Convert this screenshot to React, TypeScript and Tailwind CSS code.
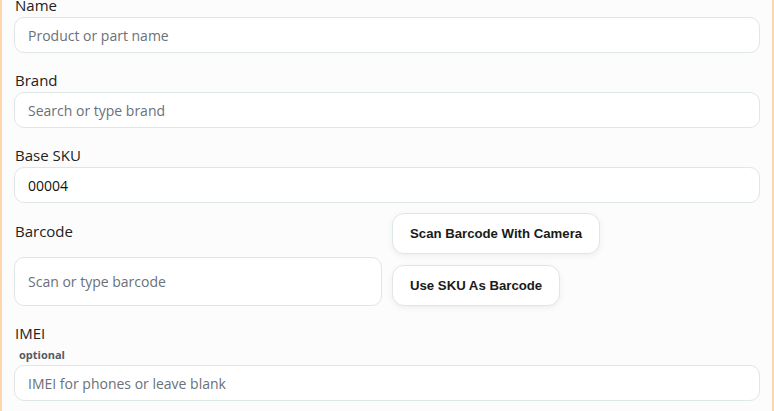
import React from 'react';

const font = { fontFamily: '"Open Sans", "Noto Sans", sans-serif' };

const inputCls =
  'w-full h-[36px] rounded-[10px] border border-[#dfe6e6] bg-white px-[13px] text-[14px] text-[#111] placeholder:text-[#6a7179] outline-none';

const btnCls =
  'h-[41px] rounded-[12px] border border-[#dfe6e6] bg-white px-[17px] text-[13.2px] font-bold text-[#1a1a1a] shadow-[0_2px_6px_rgba(0,0,0,0.06)]';

function Field({ label, placeholder, value }: { label: string; placeholder: string; value?: string }) {
  return (
    <div className="mb-[17px]">
      <label className="block h-[20px] text-[15px] leading-[20px] text-[#222] pl-[1px]">{label}</label>
      <input className={`${inputCls} mt-[2px]`} placeholder={placeholder} defaultValue={value} />
    </div>
  );
}

export default function App() {
  return (
    <div
      className="h-[411px] w-full overflow-hidden border-x-2 border-[#fdd6ad] bg-[#fcfcfc]"
      style={font}
    >
      <div className="-mt-[5px] px-[12px]">
        <Field label="Name" placeholder="Product or part name" />
        <Field label="Brand" placeholder="Search or type brand" />
        <div>
          <label className="block h-[20px] text-[15px] leading-[20px] text-[#222] pl-[1px]">Base SKU</label>
          <input className={`${inputCls} mt-[2px]`} placeholder="" defaultValue="00004" />
        </div>

        {/* Barcode row */}
        <div className="mt-[10px] grid grid-cols-2 gap-[10px]">
          <div className="pt-[8px]">
            <label className="block h-[20px] text-[15px] leading-[20px] text-[#222] pl-[1px]">Barcode</label>
            <input
              className="mt-[16px] w-full h-[49px] rounded-[10px] border border-[#dfe6e6] bg-white px-[13px] text-[14px] text-[#111] placeholder:text-[#6a7179] outline-none"
              placeholder="Scan or type barcode"
            />
          </div>
          <div className="flex flex-col items-start gap-[11px]">
            <button className={btnCls} style={{ fontFamily: '"Liberation Sans", Arial, sans-serif' }}>
              Scan Barcode With Camera
            </button>
            <button className={btnCls} style={{ fontFamily: '"Liberation Sans", Arial, sans-serif' }}>
              Use SKU As Barcode
            </button>
          </div>
        </div>

        {/* IMEI */}
        <div className="mt-[17px]">
          <label className="block h-[20px] text-[15px] leading-[20px] text-[#222] pl-[1px]">IMEI</label>
          <div className="mt-[4px] h-[15px] pl-[5px] text-[11px] font-bold leading-[15px] text-[#555b60]">optional</div>
          <input className={`${inputCls} mt-[3px]`} placeholder="IMEI for phones or leave blank" />
        </div>
      </div>
    </div>
  );
}
